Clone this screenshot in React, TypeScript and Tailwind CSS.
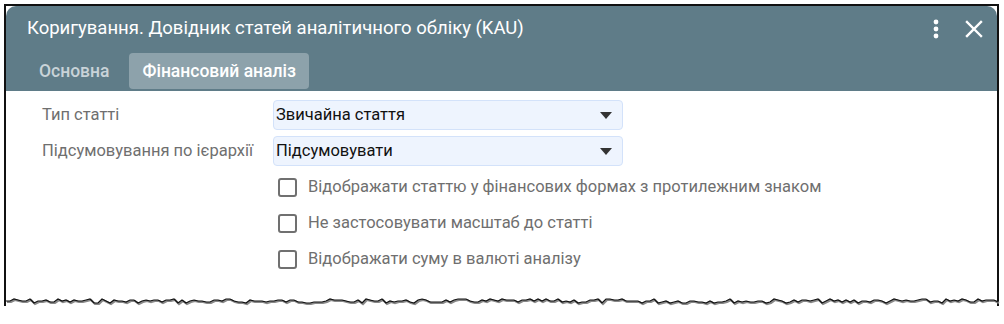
import React from 'react';

const checks = [
  'Відображати статтю у фінансових формах з протилежним знаком',
  'Не застосовувати масштаб до статті',
  'Відображати суму в валюті аналізу',
];

function Select({ value }: { value: string }) {
  return (
    <div className="flex h-[30px] w-[350px] items-center justify-between rounded-[4px] border border-[#d3e2fa] bg-[#eef4fe] pl-[2px] pr-[10px] text-[16.5px] text-[#111]">
      <span>{value}</span>
      <svg width="12" height="7" viewBox="0 0 12 7">
        <path d="M0 0 H12 L6 7 Z" fill="#333" />
      </svg>
    </div>
  );
}

function TornEdge() {
  // рваний нижній край знімка
  const pts: string[] = [];
  let seed = 7;
  for (let x = 0; x <= 994; x += 4) {
    seed = (seed * 9301 + 49297) % 233280;
    const y = 3 + Math.round((seed / 233280) * 4);
    pts.push(`${x} ${y}`);
  }
  const d = 'M' + pts.join(' L');
  return (
    <svg width="994" height="10" className="block">
      <path d={d} fill="none" stroke="#888" strokeWidth="2.2" transform="translate(1 1)" />
      <path d={d} fill="none" stroke="#111" strokeWidth="1.2" />
    </svg>
  );
}

export default function App() {
  return (
    <div className="h-[324px] w-[1004px] overflow-hidden bg-white pl-[4px] pt-[4px] font-['Roboto',sans-serif]">
      <div className="w-[995px] border-x-2 border-t-2 border-[#111] bg-white">
        {/* шапка */}
        <div className="rounded-t-[10px] bg-[#5f7c88]">
          <div className="flex h-[46px] items-center justify-between pl-[21px] pr-[14px]">
            <span className="text-[18.5px] text-white">Коригування. Довідник статей аналітичного обліку (KAU)</span>
            <div className="flex items-center gap-[26px]">
              <svg width="6" height="20" viewBox="0 0 6 20">
                <circle cx="3" cy="3" r="2.4" fill="#fff" />
                <circle cx="3" cy="10" r="2.4" fill="#fff" />
                <circle cx="3" cy="17" r="2.4" fill="#fff" />
              </svg>
              <svg width="18" height="18" viewBox="0 0 18 18">
                <path d="M2 2 L16 16 M16 2 L2 16" stroke="#fff" strokeWidth="2.4" strokeLinecap="square" />
              </svg>
            </div>
          </div>
          <div className="flex h-[39px] items-start pl-[21px] pt-[1px] text-[17.5px] font-medium">
            <div className="flex h-[36px] items-center px-[12px] text-[#c9d3d8]">Основна</div>
            <div className="ml-[8px] flex h-[36px] items-center rounded-[4px] bg-[#8da2ab] px-[13px] text-white">
              Фінансовий аналіз
            </div>
          </div>
        </div>

        {/* форма */}
        <div className="flex h-[205px] flex-col pl-[36px] pt-[9px]">
          <div className="flex items-center">
            <div className="w-[231px] text-[16.5px] text-[#6f6f6f]">Тип статті</div>
            <Select value="Звичайна стаття" />
          </div>
          <div className="mt-[6px] flex items-center">
            <div className="w-[231px] text-[16.5px] text-[#6f6f6f]">Підсумовування по ієрархії</div>
            <Select value="Підсумовувати" />
          </div>
          <div className="mt-[3px] flex flex-col pl-[236px]">
            {checks.map((c) => (
              <div key={c} className="flex h-[36px] items-center">
                <div className="h-[19px] w-[19px] rounded-[3px] border-2 border-[#707070]" />
                <span className="ml-[11px] text-[16.5px] text-[#6f6f6f]">{c}</span>
              </div>
            ))}
          </div>
        </div>
        <TornEdge />
      </div>
    </div>
  );
}
